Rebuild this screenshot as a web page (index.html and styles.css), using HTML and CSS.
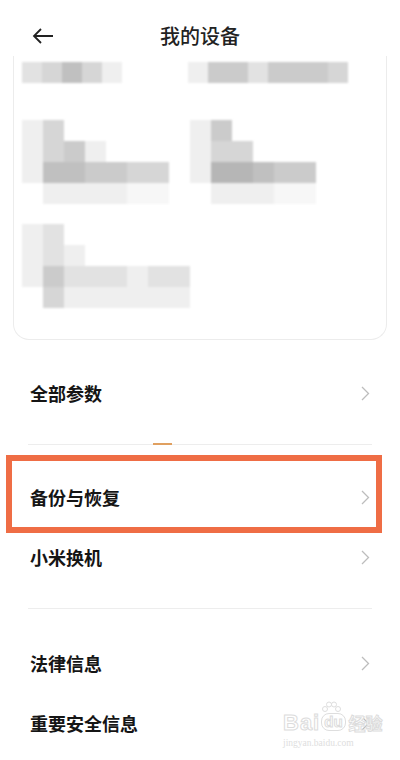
FILE: index.html
```html
<!DOCTYPE html>
<html lang="zh-CN">
<head>
    <meta charset="UTF-8">
    <meta name="viewport" content="width=device-width, initial-scale=1.0">
    <title>我的设备</title>
<link rel="stylesheet" href="styles.css">
</head>
<body>

    <!-- top bar -->
    <div class="topbar">
        <div class="back">
            <svg width="22" height="16" viewBox="0 0 22 16"><path d="M21 8H2M9 1L2 8l7 7" fill="none" stroke="#222" stroke-width="1.8" stroke-linejoin="miter"/></svg>
        </div>
        <h1 class="title">我的设备</h1>
        <div></div>
    </div>

    <!-- device card (blurred in the screenshot) -->
    <div class="card">
        <div class="card-top">
            <div class="mosaic m-top1">
                <span class="s2"></span><span class="s3"></span><span class="s5"></span><span class="s3"></span><span class="s1"></span>
            </div>
            <div class="mosaic m-top2">
                <span class="s1"></span><span class="s4"></span><span class="s4"></span><span class="s2"></span><span class="s4"></span><span class="s4"></span><span class="s4"></span><span class="s3"></span>
            </div>
        </div>
        <div class="card-grid">
            <div class="mosaic m7">
                <span class="s1"></span><span class="s3"></span><span></span><span></span><span></span><span></span><span></span>
                <span class="s1"></span><span class="s3"></span><span class="s4"></span><span class="s1"></span><span></span><span></span><span></span>
                <span class="s1"></span><span class="s5"></span><span class="s5"></span><span class="s4"></span><span class="s4"></span><span class="s3"></span><span class="s3"></span>
                <span></span><span class="s1"></span><span class="s1"></span><span class="s1"></span><span class="s1"></span><span class="s0"></span><span class="s0"></span>
            </div>
            <div class="mosaic m6">
                <span class="s1"></span><span class="s4"></span><span></span><span></span><span></span><span></span>
                <span class="s1"></span><span class="s3"></span><span class="s3"></span><span></span><span></span><span></span>
                <span class="s1"></span><span class="s6"></span><span class="s6"></span><span class="s5"></span><span class="s4"></span><span class="s4"></span>
                <span></span><span class="s1"></span><span class="s1"></span><span class="s1"></span><span class="s0"></span><span class="s0"></span>
            </div>
            <div class="mosaic m8">
                <span class="s1"></span><span class="s2"></span><span></span><span></span><span></span><span></span><span></span><span></span>
                <span class="s1"></span><span class="s2"></span><span class="s1"></span><span></span><span></span><span></span><span></span><span></span>
                <span class="s1"></span><span class="s4"></span><span class="s2"></span><span class="s2"></span><span class="s2"></span><span class="s1"></span><span class="s2"></span><span class="s2"></span>
                <span></span><span class="s3"></span><span class="s1"></span><span class="s1"></span><span class="s1"></span><span class="s1"></span><span class="s1"></span><span class="s1"></span>
            </div>
        </div>
    </div>

    <!-- settings list -->
    <div class="group first">
        <div class="item"><span>全部参数</span><svg class="chev" width="9" height="15" viewBox="0 0 9 15"><path d="M1 1l6.5 6.5L1 14" fill="none" stroke="#bdbdbd" stroke-width="1.3"/></svg></div>
    </div>
    <div class="divider"><span class="scroll-mark"></span></div>

    <div class="group">
        <div class="item marked"><span>备份与恢复</span><svg class="chev" width="9" height="15" viewBox="0 0 9 15"><path d="M1 1l6.5 6.5L1 14" fill="none" stroke="#bdbdbd" stroke-width="1.3"/></svg></div>
        <div class="item"><span>小米换机</span><svg class="chev" width="9" height="15" viewBox="0 0 9 15"><path d="M1 1l6.5 6.5L1 14" fill="none" stroke="#bdbdbd" stroke-width="1.3"/></svg></div>
    </div>
    <div class="divider"></div>

    <div class="group last">
        <div class="item"><span>法律信息</span><svg class="chev" width="9" height="15" viewBox="0 0 9 15"><path d="M1 1l6.5 6.5L1 14" fill="none" stroke="#bdbdbd" stroke-width="1.3"/></svg></div>
        <div class="item"><span>重要安全信息</span><svg class="chev" width="9" height="15" viewBox="0 0 9 15"><path d="M1 1l6.5 6.5L1 14" fill="none" stroke="#bdbdbd" stroke-width="1.3"/></svg></div>
    </div>

    <!-- watermark -->
    <div class="watermark">
        <div class="wm-logo">
            <span class="wm-bai">Bai</span>
            <span class="wm-du"><svg class="wm-paw" width="20" height="12" viewBox="0 0 20 12"><g fill="none" stroke="#dedede" stroke-width="1"><circle cx="4" cy="8" r="2.5"/><circle cx="8" cy="3.5" r="2.5"/><circle cx="13" cy="3.5" r="2.5"/><circle cx="17" cy="8" r="2.5"/></g></svg>du</span>
            <span class="wm-jy">经验</span>
        </div>
        <div class="wm-url">jingyan.baidu.com</div>
    </div>

</body>
</html>
```

FILE: styles.css
```css
*{
    margin: 0;
    padding: 0;
    box-sizing: border-box;
}
body{
    font-family: "Noto Sans CJK SC", "Noto Sans", sans-serif;
    background: #fff;
    color: #111;
    width: 400px;
    height: 760px;
    position: relative;
    overflow: hidden;
}

/* top bar */
.topbar{
    display: grid;
    grid-template-columns: 1fr auto 1fr;
    align-items: center;
    height: 56px;
    padding-top: 16px;
}
.back{
    padding-left: 32px;
    display: flex;
    align-items: center;
}
.title{
    font-size: 20px;
    font-weight: 500;
    color: #222;
    line-height: 40px;
}

/* card */
.card{
    margin: 0 13px;
    height: 284px;
    border: 1px solid #ececec;
    border-top: none;
    border-radius: 0 0 16px 16px;
    padding: 6px 0 0 8px;
}
.card-top{
    display: flex;
    gap: 66px;
}
.card-grid{
    display: grid;
    grid-template-columns: 168px 168px;
    row-gap: 20px;
    margin-top: 37px;
}
.mosaic{
    display: grid;
    grid-auto-rows: 21px;
    filter: blur(1.2px);
}
.m-top1{ grid-template-columns: repeat(5, 20px); }
.m-top2{ grid-template-columns: repeat(8, 20px); }
.m7{ grid-template-columns: repeat(7, 21px); }
.m6{ grid-template-columns: repeat(6, 21px); }
.m8{ grid-template-columns: repeat(8, 21px); }
.s0{ background: #f7f7f7; }
.s1{ background: #efefef; }
.s2{ background: #e2e2e2; }
.s3{ background: #d6d6d6; }
.s4{ background: #cbcbcb; }
.s5{ background: #c0c0c0; }
.s6{ background: #b6b6b6; }

/* list */
.group{
    padding: 22px 0 21px;
}
.group.first{
    padding-top: 23px;
}
.group.last{
    padding-bottom: 0;
    padding-top: 24px;
}
.item{
    position: relative;
    height: 60px;
    display: flex;
    align-items: center;
    justify-content: space-between;
    padding: 0 30px 0 30px;
    font-size: 18px;
    font-weight: 700;
    color: #151515;
}
.chev{
    display: block;
}
.item.marked::after{
    content: "";
    position: absolute;
    left: 6px;
    right: 18px;
    top: -12px;
    bottom: -6px;
    border: 6px solid #ef6d45;
}
.divider{
    position: relative;
    height: 1px;
    margin: 0 28px;
    background: #ededed;
}
.scroll-mark{
    position: absolute;
    left: 125px;
    top: -1px;
    width: 19px;
    height: 2px;
    background: #e0a060;
}

/* watermark */
.watermark{
    position: absolute;
    left: 283px;
    top: 704px;
    font-family: "Liberation Sans", Arial, sans-serif;
    white-space: nowrap;
}
.wm-logo{
    display: flex;
    align-items: flex-end;
    gap: 1px;
    height: 29px;
}
.wm-bai, .wm-du, .wm-jy{
    flex-shrink: 0;
    color: #fff;
    font-weight: 700;
    -webkit-text-stroke: 1px #dcdcdc;
    line-height: 20px;
}
.wm-bai{
    font-size: 22px;
    letter-spacing: 1px;
}
.wm-du{
    position: relative;
    font-size: 15px;
    border: 1px solid #dedede;
    border-radius: 8px;
    padding: 0 2px;
    line-height: 16px;
    margin-bottom: 2px;
}
.wm-paw{
    position: absolute;
    left: -1px;
    top: -13px;
}
.wm-jy{
    font-family: "Noto Sans CJK SC", sans-serif;
    font-size: 17px;
    margin-left: 2px;
}
.wm-url{
    margin-top: 4px;
    font-size: 9.5px;
    line-height: 12px;
    color: #dedede;
    font-family: "Liberation Serif", serif;
}
```
